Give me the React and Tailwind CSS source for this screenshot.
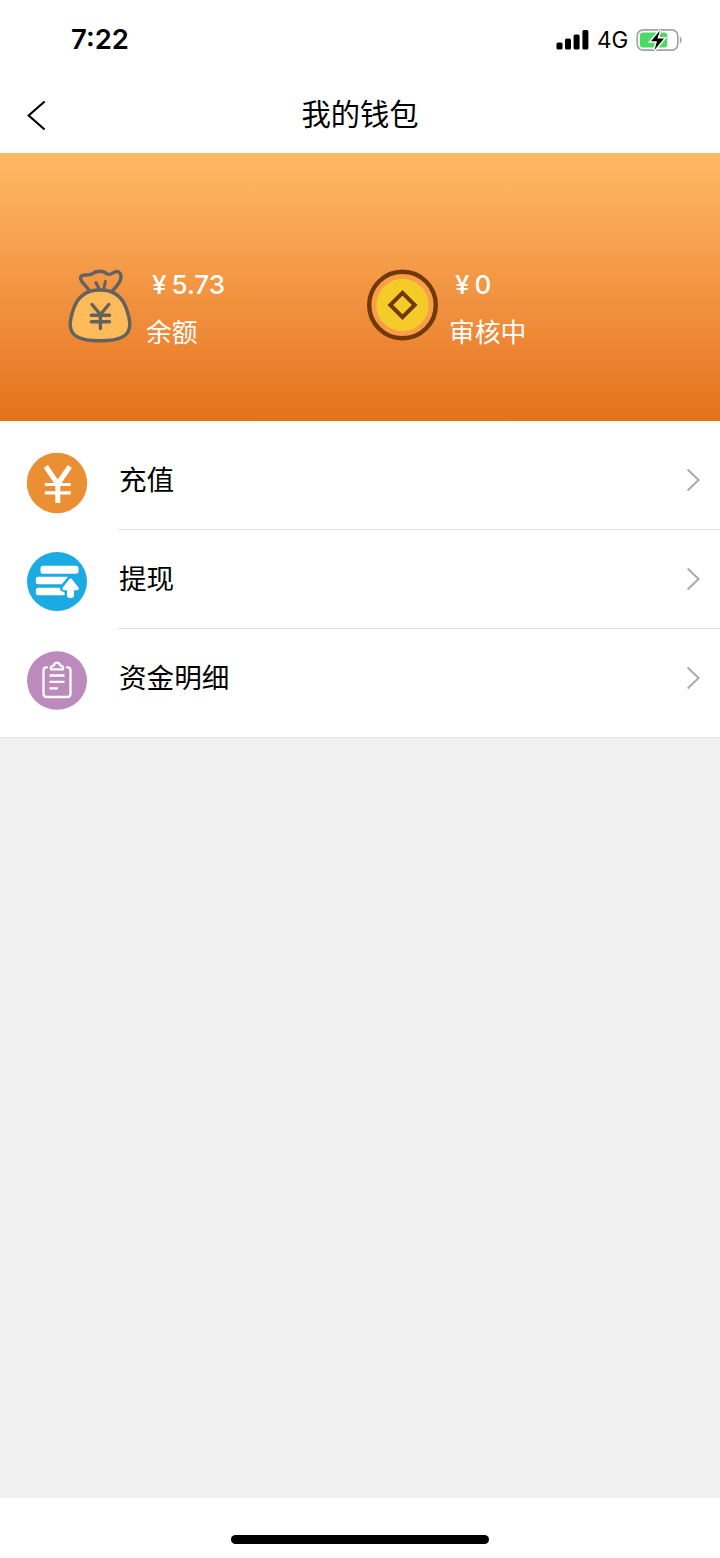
import clsx from 'clsx'

const menu = [
  { label: '充值', icon: RechargeIcon },
  { label: '提现', icon: WithdrawIcon },
  { label: '资金明细', icon: DetailIcon },
]

function StatusBar() {
  return (
    <div className="flex h-20 justify-between pl-[71px] pr-[37px]">
      <span className="mt-[19px] text-[27.5px] font-semibold leading-10 text-black">7:22</span>
      <div className="mt-5 flex h-10 items-center">
        <svg width="33" height="20" viewBox="0 0 33 20" fill="#000">
          <rect x="0.5" y="12.4" width="6" height="7.2" rx="1.6" />
          <rect x="9" y="8.6" width="6" height="11" rx="1.6" />
          <rect x="17.6" y="4.4" width="6" height="15.2" rx="1.6" />
          <rect x="26.4" y="0" width="6" height="19.6" rx="1.6" />
        </svg>
        <span className="ml-2 w-[32px] text-[22.5px] leading-10 text-black">4G</span>
        <svg className="-mt-px ml-[7px]" width="47" height="24" viewBox="0 0 47 24" fill="none">
          <rect x="1.2" y="1.9" width="40.6" height="20.2" rx="6" stroke="#a3a3a3" strokeWidth="1.6" />
          <path d="M43.8 8.5c2.4 1.3 2.4 5.7 0 7z" fill="#a3a3a3" />
          <rect x="3.8" y="4.6" width="27.5" height="15" rx="3.4" fill="#4cd964" />
          <path d="M24 2.5L15 13.2h6L18.5 22l9.5-11.5h-6.6z" fill="#000" stroke="#fff" strokeWidth="3" paintOrder="stroke" />
        </svg>
      </div>
    </div>
  )
}

function NavBar() {
  return (
    <div className="grid h-[73px] grid-cols-[120px_1fr_120px]">
      <svg className="ml-[26px] mt-5" width="22" height="32" viewBox="0 0 22 32" fill="none" stroke="#000" strokeWidth="2.2">
        <path d="M18.6 1.5L2.7 15.5l15.9 14" />
      </svg>
      <h1 className="mt-[15px] text-center text-[29.3px] leading-10 text-black">我的钱包</h1>
    </div>
  )
}

function MoneyBag() {
  return (
    <svg width="68" height="78" viewBox="0 0 68 78" fill="none" stroke="#62635f" strokeWidth="3.4" strokeLinecap="round" strokeLinejoin="round">
      <path d="M23.5 24.5C21.500 18.500 14.500 16.500 14.500 10.500C15 6.500 22 9 26 7C30 3.500 37 3 41 7C46 9 48 3 52.500 4.800C58 8.500 54 17 45.500 24.500" />
      <path d="M29.8 15.5L33.200 22M39.400 14.500L37.800 22" strokeWidth="3" />
      <path d="M34 23C20 23 11.500 30 7.500 42C5.500 48 4.200 52 4.200 57C4.200 69.500 14 73.800 34 73.800C54 73.800 63.800 69.500 63.800 57C63.800 52 62.500 48 60.500 42C56.500 30 48 23 34 23Z" fill="#ffba59" />
      <path d="M26 37.500L34.400 47.500L42.800 37.500M34.400 47.500V61.500M25.300 48.200H43.500M25.300 54.800H43.500" />
    </svg>
  )
}

function Coin() {
  return (
    <svg width="72" height="72" viewBox="0 0 72 72" fill="none">
      <circle cx="36.5" cy="36" r="33.3" fill="#fb9c4a" stroke="#713a05" strokeWidth="4.4" />
      <circle cx="36.5" cy="36" r="26.2" fill="#f5cb29" />
      <path d="M36.5 23.8L48.7 36L36.5 48.2L24.3 36Z" stroke="#713a05" strokeWidth="4" />
    </svg>
  )
}

function Balance({ icon, amount, label, className }) {
  return (
    <div className={clsx('flex items-start', className)}>
      {icon}
      <div className="text-white">
        <p className="flex pl-[5px] text-[26px] font-medium leading-9">
          <span className="mr-[5px]">¥</span>
          {amount}
        </p>
        <p className="-ml-px mt-3 text-[25.8px] leading-9">{label}</p>
      </div>
    </div>
  )
}

function RechargeIcon() {
  return (
    <svg width="62" height="62" viewBox="0 0 62 62" fill="none">
      <circle cx="31" cy="31" r="30.2" fill="#ea8f33" />
      <path d="M19.8 14.5L31.8 32L43.8 14.500M31.8 31V51" stroke="#fff" strokeWidth="5" />
      <path d="M18.8 32.5H44.8M18.8 40.8H44.8" stroke="#fff" strokeWidth="3.2" />
    </svg>
  )
}

function WithdrawIcon() {
  return (
    <svg width="62" height="62" viewBox="0 0 62 62">
      <ellipse cx="31" cy="30.5" rx="30" ry="29.5" fill="#1baae2" />
      <g fill="#fff">
        <rect x="14.5" y="14.7" width="38" height="8" rx="2.5" />
        <path d="M12.300 25.700H42L35.800 33.200H12.300Q9.800 33.200 9.800 30.700V28.200Q9.800 25.700 12.300 25.700Z" />
        <path d="M12.300 36.700H34Q33.500 40.500 38.500 41V44.200H12.300Q9.800 44.200 9.800 41.700V39.200Q9.800 36.700 12.300 36.700Z" />
        <path d="M43.400 28Q44.600 26.600 45.800 28L52.600 36.800Q53.400 39 51.200 39.300H48V44.500Q48 46.900 45.800 46.900H43.200Q41 46.900 41 44.500V39.300H38Q35.800 39 36.600 36.800Z" />
      </g>
    </svg>
  )
}

function DetailIcon() {
  return (
    <svg width="62" height="62" viewBox="0 0 62 62" fill="none" stroke="#fff" strokeWidth="2.3" strokeLinecap="round" strokeLinejoin="round">
      <ellipse cx="31" cy="30.5" rx="30" ry="29.3" fill="#bd8abd" stroke="none" />
      <path d="M21 17.3H20.5Q17.5 17.3 17.5 20.5V44Q17.5 47 20.7 47H41.3Q44.5 47 44.5 44V20.5Q44.5 17.3 41.5 17.3H41" />
      <path d="M25 19.3C24 16.5 26.5 15.5 28 15.3C28.500 11.800 33.500 11.800 34 15.3C35.500 15.500 38 16.500 37 19.3Z" />
      <path d="M23.5 25.500H38.5M23.5 31.800H38.5M23.5 38.300H32" strokeLinecap="butt" />
    </svg>
  )
}

function MenuRow({ item, last }) {
  const Icon = item.icon
  return (
    <div className="flex h-[99px]">
      <div className="w-[118px] shrink-0 pl-[26px] pt-[21px]">
        <Icon />
      </div>
      <div className={clsx('flex flex-1 items-center justify-between border-b pb-px pr-[19px]', last ? 'border-white' : 'border-[#e0e0e0]')}>
        <span className="pl-px text-[27.6px] leading-10 text-black">{item.label}</span>
        <svg width="15" height="24" viewBox="0 0 15 24" fill="none" stroke="#aaa" strokeWidth="2">
          <path d="M1.6 1.5L12.6 12L1.6 22.5" />
        </svg>
      </div>
    </div>
  )
}

function App() {
  return (
    <div className="flex h-[1558px] w-[720px] flex-col bg-[#f0f0f0] font-[Inter,'Noto_Sans_CJK_SC',sans-serif]">
      <header className="bg-white">
        <StatusBar />
        <NavBar />
      </header>

      <section className="grid h-[268px] grid-cols-[366px_1fr] bg-linear-to-b from-[#ffb964] to-[#e5711a] pt-[114px]">
        <Balance icon={<div className="w-[81px]"><MoneyBag /></div>} amount="5.73" label="余额" className="pl-[66px]" />
        <Balance icon={<div className="w-[84px] pt-[2px]"><Coin /></div>} amount="0" label="审核中" />
      </section>

      <section className="border-b border-[#e6e6e6] bg-white pb-[9px] pt-[10px]">
        {menu.map((item, i) => (
          <MenuRow key={item.label} item={item} last={i === menu.length - 1} />
        ))}
      </section>

      <footer className="mt-auto flex h-[60px] justify-center bg-white pt-[37px]">
        <div className="h-[9px] w-[258px] rounded-full bg-black" />
      </footer>
    </div>
  )
}

export default App
